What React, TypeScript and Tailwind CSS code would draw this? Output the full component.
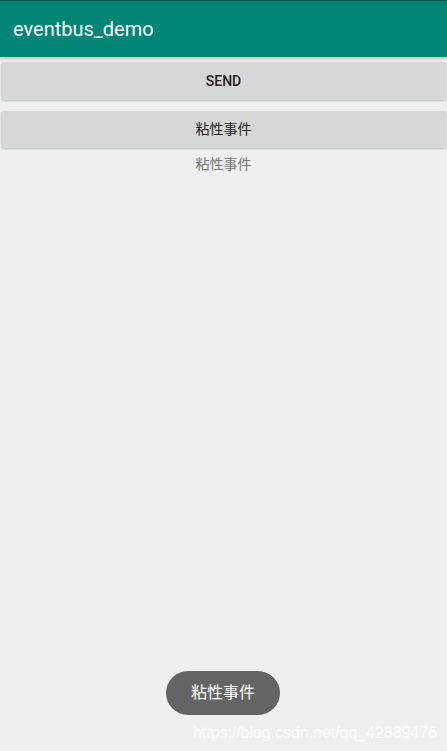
export default function App() {
  return (
    <div
      className="relative flex h-[751px] w-[447px] flex-col overflow-hidden bg-[#efefef]"
      style={{ fontFamily: 'Roboto, "Noto Sans CJK SC", sans-serif' }}
    >
      <div className="h-px bg-[#00574b]" />
      <header className="flex h-[56px] items-center bg-[#008577] px-[13px] shadow-[0_2px_3px_rgba(0,0,0,0.18)]">
        <h1 className="text-[20px] font-normal text-white">eventbus_demo</h1>
      </header>
      <div className="flex flex-col px-px pt-[5px]">
        <button className="h-[38px] rounded-[2px] bg-[#d6d7d7] text-[14px] font-medium text-[#222] shadow-[0_1px_2px_rgba(0,0,0,0.2)]">
          SEND
        </button>
        <button className="mt-[11px] h-[37px] rounded-[2px] bg-[#d6d7d7] text-[14px] text-[#222] shadow-[0_1px_2px_rgba(0,0,0,0.2)]">
          粘性事件
        </button>
        <p className="mt-[6px] text-center text-[14px] leading-[20px] text-[#777]">粘性事件</p>
      </div>
      <div className="absolute left-[166px] top-[671px] flex h-[44px] w-[114px] items-center justify-center rounded-full bg-[#646464] text-[16px] text-white">
        粘性事件
      </div>
      <div
        className="absolute left-[193px] top-[721px] text-[16px] tracking-[-0.05px] text-[#fbfbfb]"
        style={{ fontFamily: '"Liberation Sans", Arial, sans-serif' }}
      >
        https://blog.csdn.net/qq_42889476
      </div>
    </div>
  );
}
